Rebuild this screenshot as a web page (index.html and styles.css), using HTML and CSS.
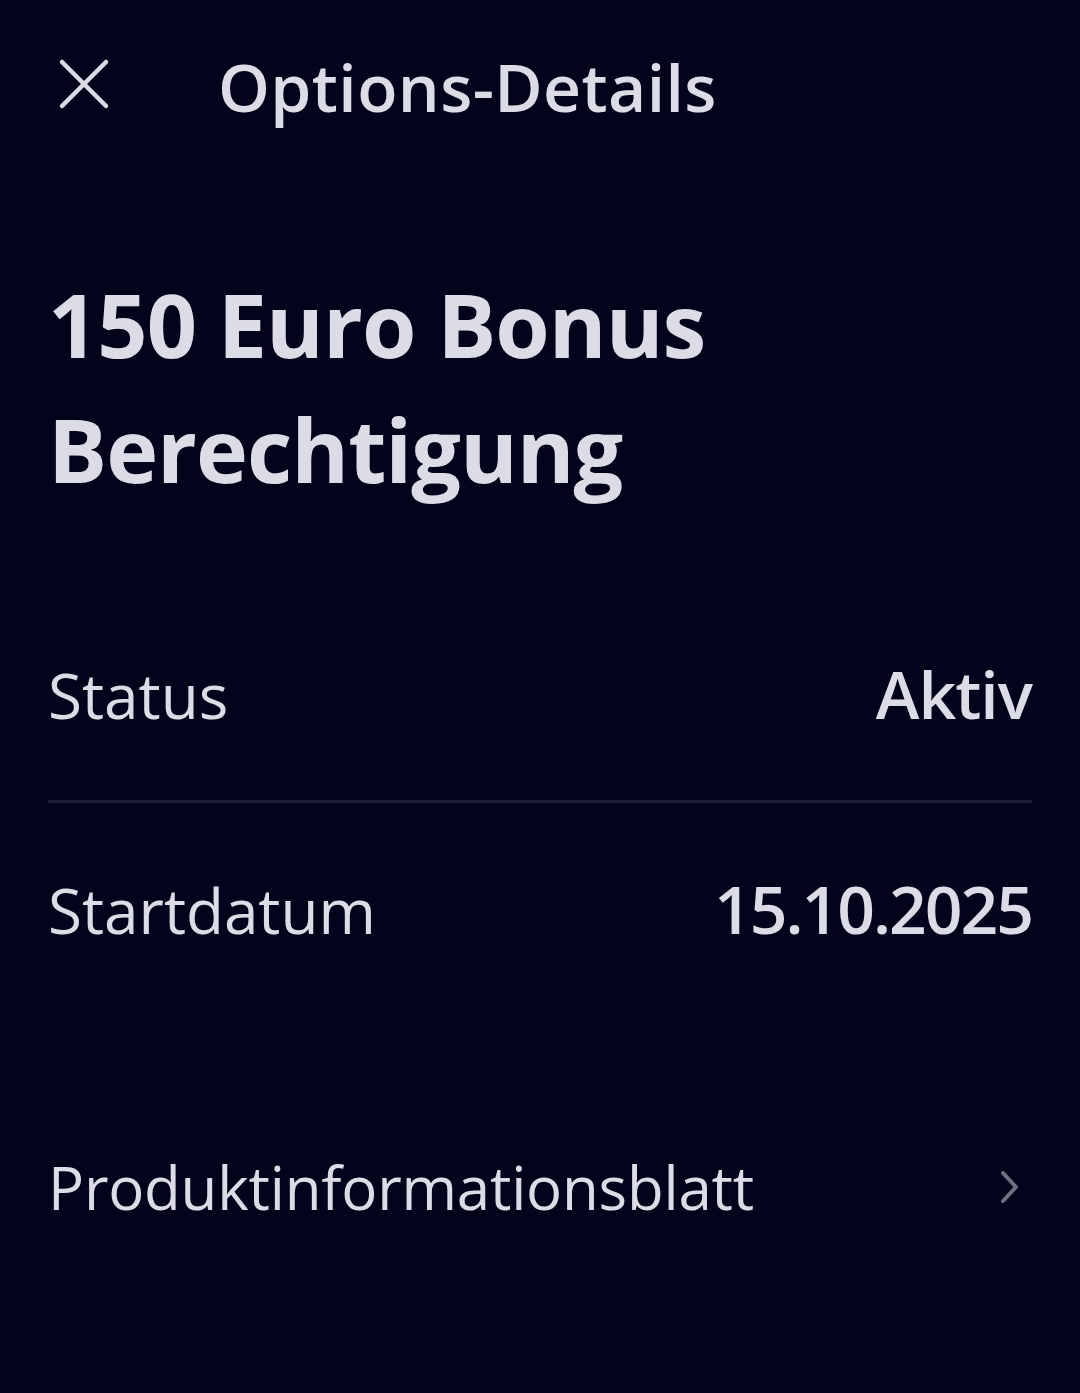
FILE: index.html
```html
<!DOCTYPE html>
<html lang="de">
<head>
<meta charset="utf-8">
<link rel="stylesheet" href="styles.css">
</head>
<body>
<div class="screen">
  <header class="topbar">
    <button class="close" aria-label="Schließen">
      <svg width="52" height="52" viewBox="0 0 52 52"><path d="M4 4 L48 48 M48 4 L4 48" stroke="#dcdce6" stroke-width="4.5" stroke-linecap="round" fill="none"/></svg>
    </button>
    <h1 class="title">Options-Details</h1>
  </header>
  <h2 class="headline">150 Euro Bonus Berechtigung</h2>
  <div class="row row-status">
    <span class="label">Status</span>
    <span class="value">Aktiv</span>
  </div>
  <div class="divider"></div>
  <div class="row row-date">
    <span class="label">Startdatum</span>
    <span class="value">15.10.2025</span>
  </div>
  <div class="link-row">
    <span class="label">Produktinformationsblatt</span>
    <svg class="chev" width="20" height="34" viewBox="0 0 20 34"><path d="M3 3 L16 17 L3 31" stroke="#707082" stroke-width="4" stroke-linecap="round" stroke-linejoin="round" fill="none"/></svg>
  </div>
</div>
</body>
</html>
```
FILE: styles.css
```css
html, body {
  margin: 0;
  padding: 0;
  background: #03031c;
}
body {
  font-family: "Open Sans", "Noto Sans", sans-serif;
  color: #dcdce6;
  width: 1080px;
  height: 1393px;
  overflow: hidden;
}
.screen {
  padding: 0 48px;
}
.topbar {
  display: flex;
  align-items: center;
  height: 176px;
  box-sizing: border-box;
}
.close {
  background: none;
  border: 0;
  padding: 0;
  margin-left: 10px;
  width: 52px;
  height: 52px;
  display: flex;
  margin-top: -8px;
}
.title {
  margin: -4px 0 0 108px;
  font-size: 66px;
  font-weight: 600;
  letter-spacing: 0.4px;
  line-height: 1;
}
.headline {
  margin: 86px 0 0;
  font-size: 88px;
  font-weight: 700;
  line-height: 125px;
  letter-spacing: -1px;
  width: 720px;
}
.row {
  display: flex;
  justify-content: space-between;
  align-items: baseline;
  font-size: 62px;
  line-height: 1;
}
.row-status {
  margin-top: 148px;
}
.value {
  font-weight: 600;
  font-size: 66px;
  letter-spacing: -1px;
}
.row-date .value {
  letter-spacing: -2px;
}
.divider {
  height: 3px;
  background: #1f1f33;
  margin-top: 74px;
}
.row-date {
  margin-top: 72px;
}
.link-row {
  display: flex;
  justify-content: space-between;
  align-items: center;
  font-size: 60px;
  letter-spacing: -0.2px;
  line-height: 1;
  margin-top: 216px;
}
.chev {
  margin-right: 12px;
  margin-top: 0;
}
```
